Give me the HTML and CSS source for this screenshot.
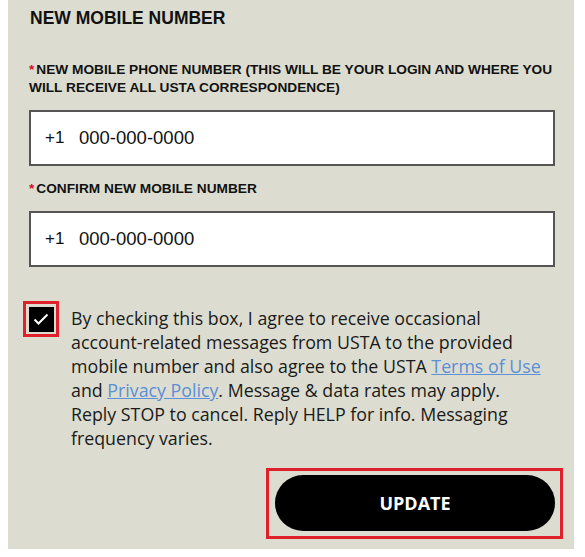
FILE: index.html
```html
<!DOCTYPE html>
<html lang="en">
<head>
    <meta charset="UTF-8">
    <meta name="viewport" content="width=device-width, initial-scale=1.0">
    <title>New Mobile Number</title>
    <link rel="stylesheet" href="styles.css">
</head>
<body>
    <div class="panel">
        <h2 class="title">NEW MOBILE NUMBER</h2>

        <form class="mobile-form">
            <label class="field-label" for="phone"><span class="req">*</span>NEW MOBILE PHONE NUMBER (THIS WILL BE YOUR LOGIN AND WHERE YOU WILL RECEIVE ALL USTA CORRESPONDENCE)</label>
            <div class="phone-box">
                <span class="prefix">+1</span>
                <input class="phone-input" type="text" id="phone" placeholder="000-000-0000">
            </div>

            <label class="field-label" for="confirm"><span class="req">*</span>CONFIRM NEW MOBILE NUMBER</label>
            <div class="phone-box">
                <span class="prefix">+1</span>
                <input class="phone-input" type="text" id="confirm" placeholder="000-000-0000">
            </div>

            <div class="consent">
                <div class="check-outline">
                    <span class="check">
                        <svg width="16" height="12" viewBox="0 0 16 12"><path d="M1.5 6.5 L5.5 10.5 L14.5 1.5" fill="none" stroke="#fff" stroke-width="2"/></svg>
                    </span>
                </div>
                <p class="consent-text">By checking this box, I agree to receive occasional account-related messages from USTA to the provided mobile number and also agree to the USTA <a href="#">Terms of Use</a> and <a href="#">Privacy Policy</a>. Message &amp; data rates may apply. Reply STOP to cancel. Reply HELP for info. Messaging frequency varies.</p>
            </div>

            <div class="actions">
                <div class="btn-outline">
                    <button class="update" type="button">UPDATE</button>
                </div>
            </div>
        </form>
    </div>
</body>
</html>
```

FILE: styles.css
```css
body {
    margin: 0;
    padding: 0;
    background: #fff;
    font-family: "Liberation Sans", Arial, sans-serif;
    color: #111;
}

.panel {
    margin-left: 8px;
    width: 566px;
    height: 549px;
    box-sizing: border-box;
    background-color: #dcddd0;
    padding: 8px 19px 0 21px;
}

.title {
    margin: 0 0 0 1px;
    font-size: 17.5px;
    font-weight: bold;
    line-height: 20px;
    color: #111;
}

.field-label {
    display: block;
    font-size: 13.7px;
    font-weight: bold;
    line-height: 18px;
    color: #111;
}

.mobile-form .field-label:first-child {
    margin-top: 33px;
}

.req {
    color: #d0102b;
    margin-right: 2px;
}

.phone-box {
    display: flex;
    align-items: center;
    height: 56px;
    box-sizing: border-box;
    border: 2px solid #555;
    background: #fff;
    margin-top: 13px;
    margin-bottom: 14px;
    padding-left: 14px;
}

.prefix {
    font-size: 17px;
    width: 34px;
}

.phone-input {
    border: 0;
    outline: none;
    font-family: inherit;
    font-size: 18.5px;
    color: #111;
    background: transparent;
    padding: 0;
}

.phone-input::placeholder {
    color: #111;
}

.consent {
    display: flex;
    gap: 12px;
    margin-top: 34px;
}

.check-outline {
    flex: none;
    width: 36px;
    height: 36px;
    box-sizing: border-box;
    border: 3px solid #e0202a;
    display: flex;
    align-items: center;
    justify-content: center;
    margin-left: -6px;
}

.check {
    width: 25px;
    height: 25px;
    background: #000;
    display: flex;
    align-items: center;
    justify-content: center;
}

.consent-text {
    margin: 5px 0 0 0;
    padding-right: 8px;
    font-family: "Open Sans", sans-serif;
    font-size: 17.8px;
    line-height: 24px;
    color: #1a1a1a;
}

.consent-text a {
    color: #5b8fd6;
}

.actions {
    display: flex;
    justify-content: flex-end;
    margin-top: 18px;
    margin-right: -8px;
}

.btn-outline {
    border: 3px solid #e0202a;
    padding: 4px 5px 5px 6px;
}

.update {
    width: 280px;
    height: 56px;
    border: 0;
    border-radius: 28px;
    background: #000;
    color: #fff;
    font-family: "Open Sans", sans-serif;
    font-weight: 700;
    font-size: 18px;
    cursor: pointer;
}
```
